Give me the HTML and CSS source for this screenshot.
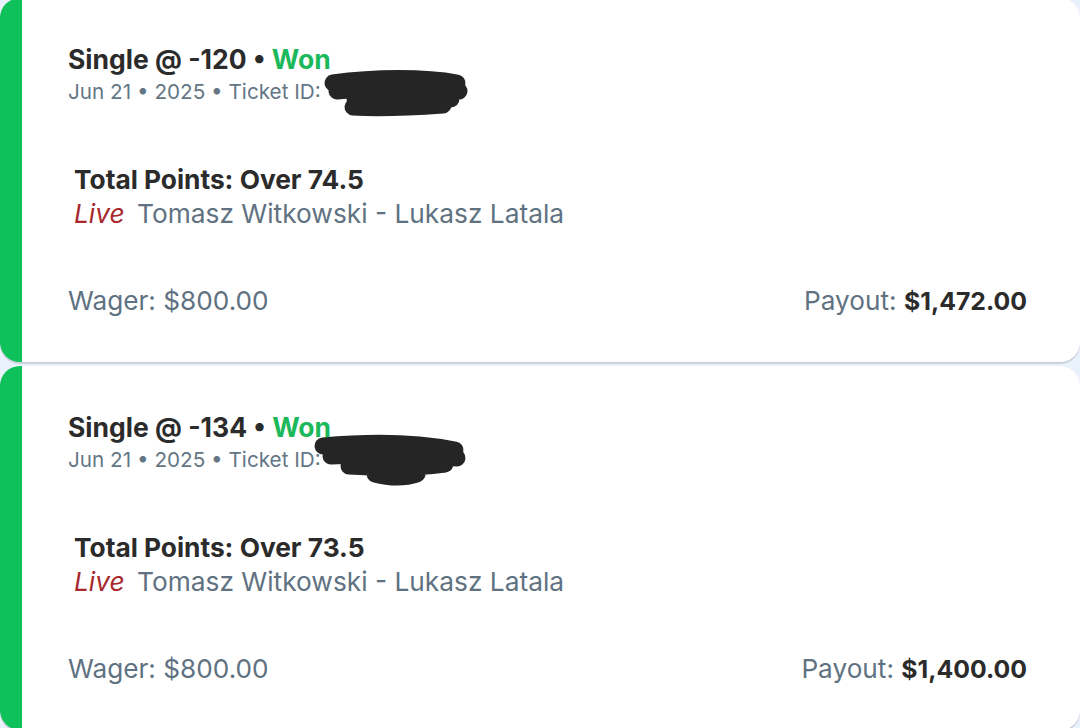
FILE: index.html
```html
<!DOCTYPE html>
<html lang="en">
<head>
<meta charset="utf-8">
<title>Bets</title>
<link rel="stylesheet" href="styles.css">
</head>
<body>
<main class="list">
  <article class="card">
    <div class="title">Single @ -120 • <span class="won">Won</span></div>
    <div class="meta">Jun 21 • 2025 • Ticket ID: <span class="redact">
      <svg class="scribble s1" width="160" height="56" viewBox="0 0 160 56"><path d="M18 14 C60 8 110 8 142 14 M22 22 C60 18 110 18 144 22 M40 30 C70 32 110 30 136 30 M38 38 C70 40 100 38 128 36" fill="none" stroke="#252525" stroke-width="17" stroke-linecap="round"/></svg>
    </span></div>
    <div class="selection">
      <div class="market">Total Points: Over 74.5</div>
      <div class="event"><span class="live">Live</span> Tomasz Witkowski - Lukasz Latala</div>
    </div>
    <div class="amounts">
      <span>Wager: $800.00</span>
      <span>Payout: <b>$1,472.00</b></span>
    </div>
  </article>
  <article class="card">
    <div class="title">Single @ -134 • <span class="won">Won</span></div>
    <div class="meta">Jun 21 • 2025 • Ticket ID: <span class="redact">
      <svg class="scribble s2" width="170" height="64" viewBox="0 0 170 64"><path d="M18 16 C60 12 110 12 150 20 M26 26 C70 24 110 24 152 28 M44 36 C80 38 110 38 140 34 M70 44 C85 48 100 48 112 44" fill="none" stroke="#252525" stroke-width="17" stroke-linecap="round"/></svg>
    </span></div>
    <div class="selection">
      <div class="market">Total Points: Over 73.5</div>
      <div class="event"><span class="live">Live</span> Tomasz Witkowski - Lukasz Latala</div>
    </div>
    <div class="amounts">
      <span>Wager: $800.00</span>
      <span>Payout: <b>$1,400.00</b></span>
    </div>
  </article>
</main>
</body>
</html>
```
FILE: styles.css
```css
html, body {
  margin: 0;
  padding: 0;
  background: #e9f1fb;
  font-family: Inter, "Noto Sans", "Liberation Sans", sans-serif;
}
.list {
  display: flex;
  flex-direction: column;
  gap: 4px;
  margin-top: -2px;
}
.card {
  background: #ffffff;
  border-left: 22px solid #0ec15a;
  border-radius: 20px;
  box-shadow: 0 1.5px 1px rgba(0, 0, 0, 0.13);
  padding: 45px 53px 44px 46px;
  color: #2a2a2a;
}
.title {
  font-size: 26.5px;
  line-height: 32px;
  font-weight: 700;
  color: #2b2b2b;
}
.won { color: #1bb95b; }
.meta {
  margin-top: 3px;
  font-size: 20.7px;
  line-height: 28px;
  color: #647684;
}
.redact {
  position: relative;
  display: inline-block;
  width: 0;
  height: 28px;
  vertical-align: top;
}
.scribble { position: absolute; }
.s1 { left: -12px; top: -9px; }
.s2 { left: -22px; top: -16px; }
.selection {
  margin-top: 56px;
  padding-left: 6px;
}
.market {
  font-size: 26.3px;
  line-height: 35px;
  font-weight: 700;
  color: #2b2b2b;
}
.event {
  font-size: 26.3px;
  line-height: 34px;
  color: #5f7281;
}
.live {
  color: #a9282d;
  font-style: italic;
  margin-right: 5px;
}
.amounts {
  margin-top: 53px;
  display: flex;
  justify-content: space-between;
  font-size: 26.2px;
  line-height: 34px;
  color: #5f7281;
}
.amounts b { color: #2b2b2b; font-weight: 700; font-size: 24.8px; }
```
